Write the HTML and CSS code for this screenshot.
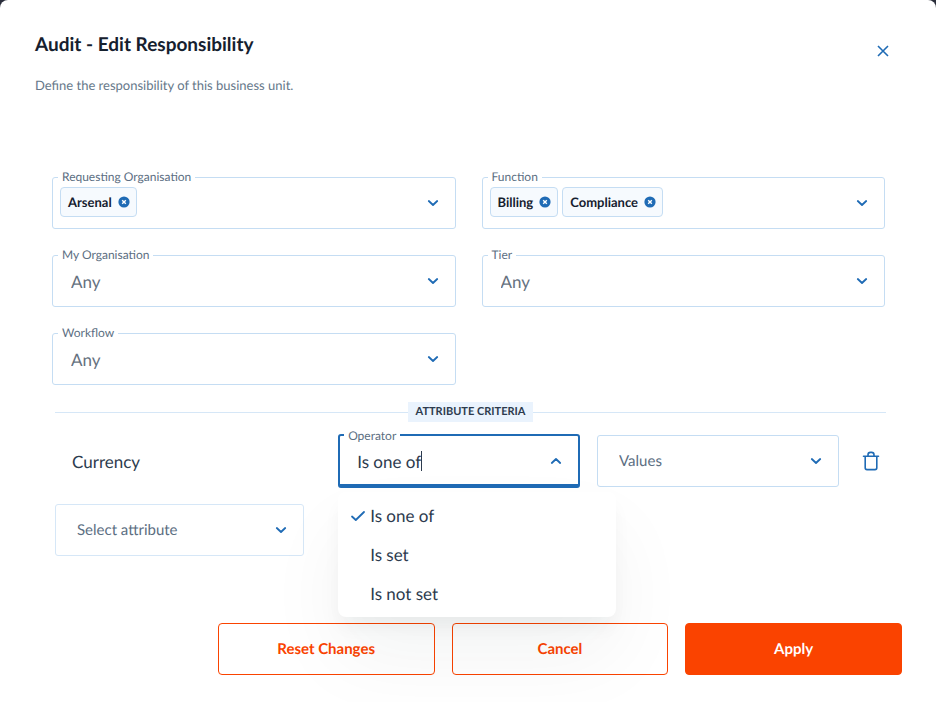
FILE: index.html
```html
<!DOCTYPE html>
<html lang="en">
<head>
    <meta charset="UTF-8">
    <meta name="viewport" content="width=device-width, initial-scale=1.0">
    <title>Audit - Edit Responsibility</title>
    <link rel="stylesheet" href="styles.css">
</head>
<body>
    <!-- Shared icons -->
    <svg class="sprite" aria-hidden="true">
        <symbol id="chevron" viewBox="0 0 12 8">
            <path d="M1.8 2 L6 6 L10.2 2" fill="none" stroke="currentColor" stroke-width="1.8" stroke-linecap="round" stroke-linejoin="round"/>
        </symbol>
        <symbol id="remove" viewBox="0 0 12 12">
            <circle cx="6" cy="6" r="5.6" fill="currentColor"/>
            <path d="M4.2 4.2 L7.8 7.8 M7.8 4.2 L4.2 7.8" stroke="#fff" stroke-width="1.4"/>
        </symbol>
    </svg>

    <main class="modal">
        <header class="modal-header">
            <div>
                <h1>Audit - Edit Responsibility</h1>
                <p>Define the responsibility of this business unit.</p>
            </div>
            <button type="button" class="icon-btn close-btn" aria-label="Close">
                <svg width="12" height="12" viewBox="0 0 12 12"><path d="M1 1 L11 11 M11 1 L1 11" stroke="currentColor" stroke-width="1.6"/></svg>
            </button>
        </header>

        <form>
            <div class="fields">
                <div class="field multi">
                    <label for="requesting">Requesting Organisation</label>
                    <span class="chip">Arsenal <button type="button" aria-label="Remove Arsenal"><svg><use href="#remove"/></svg></button></span>
                    <input type="text" id="requesting">
                    <svg class="chevron"><use href="#chevron"/></svg>
                </div>
                <div class="field multi">
                    <label for="function">Function</label>
                    <span class="chip">Billing <button type="button" aria-label="Remove Billing"><svg><use href="#remove"/></svg></button></span>
                    <span class="chip">Compliance <button type="button" aria-label="Remove Compliance"><svg><use href="#remove"/></svg></button></span>
                    <input type="text" id="function">
                    <svg class="chevron"><use href="#chevron"/></svg>
                </div>
                <div class="field">
                    <label for="myOrg">My Organisation</label>
                    <select id="myOrg"><option>Any</option></select>
                    <svg class="chevron"><use href="#chevron"/></svg>
                </div>
                <div class="field">
                    <label for="tier">Tier</label>
                    <select id="tier"><option>Any</option></select>
                    <svg class="chevron"><use href="#chevron"/></svg>
                </div>
                <div class="field">
                    <label for="workflow">Workflow</label>
                    <select id="workflow"><option>Any</option></select>
                    <svg class="chevron"><use href="#chevron"/></svg>
                </div>
            </div>

            <section class="criteria">
                <h2><span>ATTRIBUTE CRITERIA</span></h2>
                <div class="criteria-row">
                    <div class="attribute">Currency</div>
                    <div class="field active">
                        <label for="operator">Operator</label>
                        <input type="text" id="operator" role="combobox" aria-expanded="true" aria-controls="operatorMenu" value="Is one of">
                        <svg class="chevron up"><use href="#chevron"/></svg>
                        <ul class="menu" id="operatorMenu" role="listbox">
                            <li role="option" aria-selected="true">
                                <svg width="16" height="12" viewBox="0 0 16 12"><path d="M2 6.5 L5.8 10 L14 2" fill="none" stroke="currentColor" stroke-width="1.8" stroke-linecap="round" stroke-linejoin="round"/></svg>
                                Is one of
                            </li>
                            <li role="option">Is set</li>
                            <li role="option">Is not set</li>
                        </ul>
                    </div>
                    <div class="field small">
                        <select aria-label="Values"><option>Values</option></select>
                        <svg class="chevron"><use href="#chevron"/></svg>
                    </div>
                    <button type="button" class="icon-btn" aria-label="Delete Currency">
                        <svg width="18" height="20" viewBox="0 0 18 20" fill="none" stroke="currentColor" stroke-width="1.6" stroke-linecap="round" stroke-linejoin="round">
                            <path d="M1.5 5.2 H16.5 M3.2 5.2 V16.8 Q3.2 18.6 5 18.6 H13 Q14.8 18.6 14.8 16.8 V5.2"/>
                            <path d="M6 5 V3.8 Q6 1.4 8.4 1.4 H9.6 Q12 1.4 12 3.8 V5"/>
                        </svg>
                    </button>
                </div>
                <div class="field small light">
                    <select aria-label="Select attribute"><option>Select attribute</option></select>
                    <svg class="chevron"><use href="#chevron"/></svg>
                </div>
            </section>

            <footer>
                <button type="reset" class="btn">Reset Changes</button>
                <button type="button" class="btn">Cancel</button>
                <button type="submit" class="btn primary">Apply</button>
            </footer>
        </form>
    </main>
</body>
</html>
```
FILE: styles.css
```css
/* General Reset */
* {
    margin: 0;
    padding: 0;
    box-sizing: border-box;
}

body {
    font-family: Lato, "Liberation Sans", sans-serif;
    text-rendering: geometricPrecision;
    background: #2a2e3b;
    color: #2d3b4e;
}

button, input, select {
    font-family: inherit;
    text-rendering: inherit;
    color: inherit;
    border: none;
    background: none;
    outline: none;
}

button {
    cursor: pointer;
}

.sprite {
    display: none;
}

.modal {
    min-height: 100vh;
    padding: 33px 34px 27px 35px;
    background: #fff;
    border-radius: 8px 8px 0 0;
}

/* Header */
.modal-header {
    display: flex;
    justify-content: space-between;
    align-items: flex-start;
    margin-bottom: 82px;
}

h1 {
    font-size: 19px;
    line-height: 24px;
    color: #15202e;
    margin-bottom: 18px;
}

.modal-header p {
    font-size: 13px;
    line-height: 20px;
    color: #66788a;
}

.icon-btn {
    display: flex;
    align-items: center;
    justify-content: center;
    width: 30px;
    height: 30px;
    color: #1f6bb5;
}

.close-btn {
    margin: 3px 4px 0 0;
}

/* Fields */
.fields {
    display: grid;
    grid-template-columns: 1fr 1fr;
    gap: 26px;
    margin: 0 17px;
}

.field {
    position: relative;
    display: flex;
    height: 52px;
    border: 1px solid #c5ddf3;
    border-radius: 3px;
}

.field label {
    position: absolute;
    top: -9px;
    left: 5px;
    padding: 0 4px;
    background: #fff;
    font-size: 12px;
    line-height: 16px;
    color: #5b6e82;
}

.field select {
    appearance: none;
    width: 100%;
    padding: 0 40px 0 18px;
    font-size: 17px;
    color: #66727f;
}

.field.small select {
    padding-left: 21px;
    font-size: 15px;
    color: #5b6e82;
}

.chevron {
    position: absolute;
    top: 21px;
    right: 16px;
    width: 12px;
    height: 8px;
    color: #1f6bb5;
    pointer-events: none;
}

.chevron.up {
    transform: rotate(180deg);
}

.multi {
    align-items: flex-start;
    gap: 4px;
    padding: 9px 40px 9px 7px;
}

.multi input {
    flex: 1;
    min-width: 0;
    height: 30px;
}

.chip {
    display: flex;
    align-items: center;
    gap: 6px;
    height: 30px;
    padding: 0 6px 0 7px;
    border: 1px solid #c5ddf3;
    border-radius: 4px;
    background: #f6fafe;
    font-size: 13px;
    font-weight: bold;
    color: #15202e;
}

.chip button {
    display: flex;
    color: #1f6bb5;
}

.chip svg {
    width: 12px;
    height: 12px;
}

/* Attribute criteria */
.criteria {
    margin: 17px 16px 0 20px;
}

.criteria h2 {
    display: flex;
    align-items: center;
    margin-bottom: 12px;
    font-size: 11px;
    line-height: 20px;
}

.criteria h2::before,
.criteria h2::after {
    content: "";
    flex: 1;
    height: 1px;
    background: #d6e7f7;
}

.criteria h2 span {
    padding: 0 8px;
    background: #eaf3fd;
}

.criteria-row {
    display: grid;
    grid-template-columns: 1.1fr 1fr 1fr 30px;
    gap: 17px;
    align-items: center;
    margin-bottom: 16px;
}

.attribute {
    padding-left: 17px;
    font-size: 17px;
}

.field.light {
    width: 30%;
    border-color: #d6e7f7;
}

.field.active {
    height: 54px;
    border: 2px solid #1f6bb5;
    border-bottom-width: 4px;
    align-items: center;
    padding: 2px 0 0 17px;
}

.active label {
    top: -8px;
    left: 4px;
}

.active input {
    field-sizing: content;
    height: 20px;
    border-right: 1px solid #2d3b4e;
    font-size: 17px;
}

.menu {
    position: absolute;
    top: 56px;
    left: -2px;
    z-index: 10;
    width: 278px;
    padding: 4px 0;
    list-style: none;
    background: #fff;
    border-radius: 8px;
    box-shadow: 0 12px 20px -4px rgba(20, 30, 40, 0.06), 0 40px 80px rgba(20, 30, 40, 0.05);
}

.menu li {
    display: flex;
    align-items: center;
    height: 39px;
    padding-left: 32px;
    font-size: 17px;
}

.menu li[aria-selected="true"] {
    gap: 4px;
    padding-left: 12px;
}

.menu svg {
    color: #1f6bb5;
}

/* Actions */
footer {
    display: flex;
    justify-content: flex-end;
    gap: 17px;
    margin-top: 67px;
}

.btn {
    width: 25%;
    height: 52px;
    border: 1px solid #fa4300;
    border-radius: 4px;
    font-size: 15px;
    font-weight: bold;
    color: #fa4300;
}

.btn.primary {
    background: #fa4300;
    color: #fff;
}
```
